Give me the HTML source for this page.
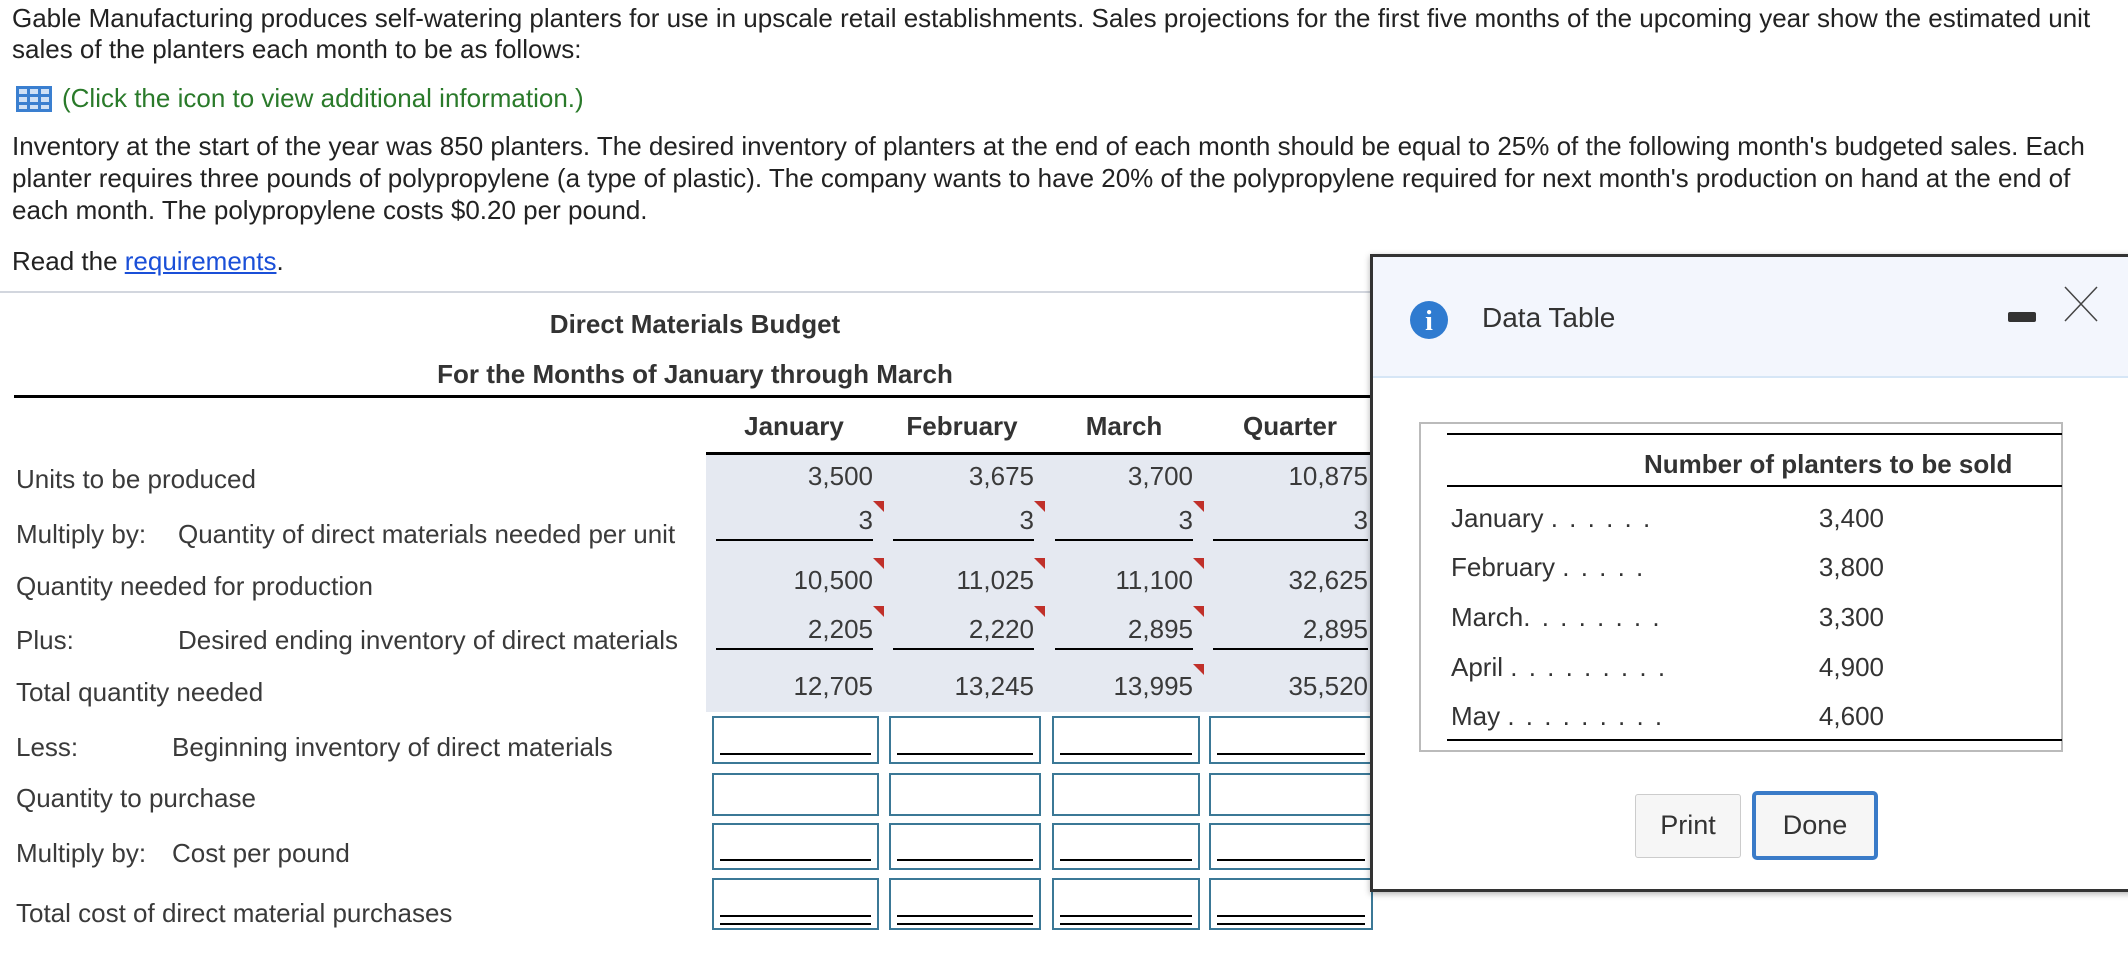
<!DOCTYPE html>
<html><head><meta charset="utf-8"><style>
body{margin:0;width:2128px;height:968px;position:relative;overflow:hidden;background:#fff;font-family:"Liberation Sans",Arial,sans-serif;color:#222;font-size:26px}
.a{position:absolute;white-space:nowrap;line-height:1}
.b{font-weight:bold;color:#333}
.g{color:#3a3a3a}
.r{text-align:right}
.c{text-align:center}
.hl{position:absolute;height:2px;background:#000}
.box{position:absolute;border:2px solid #3b7896;box-sizing:border-box}
.box i{position:absolute;left:6px;right:6px;bottom:7px;height:2px;background:#000}
.box u{position:absolute;left:6px;right:6px;bottom:3px;height:2px;background:#000}
.tri{position:absolute;width:0;height:0;border-left:11px solid transparent;border-top:11px solid #c0302a}
.d{letter-spacing:2px}
</style></head><body>
<div class="a" style="left:12px;top:5px">Gable Manufacturing produces self-watering planters for use in upscale retail establishments. Sales projections for the first five months of the upcoming year show the estimated unit</div>
<div class="a" style="left:12px;top:36px">sales of the planters each month to be as follows:</div>
<svg style="position:absolute;left:16px;top:86px" width="36" height="26" viewBox="0 0 36 26"><rect x="0" y="0" width="36" height="26" fill="#3a7fd0"/><g fill="#cfe0f5"><rect x="3" y="3" width="8" height="5"/><rect x="14" y="3" width="8" height="5"/><rect x="25" y="3" width="8" height="5"/><rect x="3" y="11" width="8" height="5"/><rect x="14" y="11" width="8" height="5"/><rect x="25" y="11" width="8" height="5"/><rect x="3" y="19" width="8" height="4"/><rect x="14" y="19" width="8" height="4"/><rect x="25" y="19" width="8" height="4"/></g></svg>
<div class="a" style="left:62px;top:85px;color:#2a7a2a">(Click the icon to view additional information.)</div>
<div class="a" style="left:12px;top:133px">Inventory at the start of the year was 850 planters. The desired inventory of planters at the end of each month should be equal to 25% of the following month's budgeted sales. Each</div>
<div class="a" style="left:12px;top:165px">planter requires three pounds of polypropylene (a type of plastic). The company wants to have 20% of the polypropylene required for next month's production on hand at the end of</div>
<div class="a" style="left:12px;top:197px">each month. The polypropylene costs $0.20 per pound.</div>
<div class="a" style="left:12px;top:248px">Read the <span style="color:#1a4fd8;text-decoration:underline">requirements</span>.</div>
<div style="position:absolute;left:0;top:291px;width:1371px;height:2px;background:#d2d6de"></div>
<div class="a b c" style="left:395px;width:600px;top:311px">Direct Materials Budget</div>
<div class="a b c" style="left:395px;width:600px;top:361px">For the Months of January through March</div>
<div class="hl" style="left:14px;top:395px;width:1357px;height:3px"></div>
<div class="a b c" style="left:724px;width:140px;top:413px">January</div>
<div class="a b c" style="left:892px;width:140px;top:413px">February</div>
<div class="a b c" style="left:1054px;width:140px;top:413px">March</div>
<div class="a b c" style="left:1220px;width:140px;top:413px">Quarter</div>
<div style="position:absolute;left:706px;top:452px;width:665px;height:257px;background:#e5e9f1;border-top:3px solid #000"></div>
<div class="a g" style="left:16px;top:466px">Units to be produced</div>
<div class="a g" style="left:16px;top:521px">Multiply by:</div><div class="a g" style="left:178px;top:521px">Quantity of direct materials needed per unit</div>
<div class="a g" style="left:16px;top:573px">Quantity needed for production</div>
<div class="a g" style="left:16px;top:627px">Plus:</div><div class="a g" style="left:178px;top:627px">Desired ending inventory of direct materials</div>
<div class="a g" style="left:16px;top:679px">Total quantity needed</div>
<div class="a g" style="left:16px;top:734px">Less:</div><div class="a g" style="left:172px;top:734px">Beginning inventory of direct materials</div>
<div class="a g" style="left:16px;top:785px">Quantity to purchase</div>
<div class="a g" style="left:16px;top:840px">Multiply by:</div><div class="a g" style="left:172px;top:840px">Cost per pound</div>
<div class="a g" style="left:16px;top:900px">Total cost of direct material purchases</div>

<div class="a g r" style="right:1255px;top:463px">3,500</div>
<div class="a g r" style="right:1094px;top:463px">3,675</div>
<div class="a g r" style="right:935px;top:463px">3,700</div>
<div class="a g r" style="right:760px;top:463px">10,875</div>
<div class="a g r" style="right:1255px;top:507px">3</div>
<div class="a g r" style="right:1094px;top:507px">3</div>
<div class="a g r" style="right:935px;top:507px">3</div>
<div class="a g r" style="right:760px;top:507px">3</div>
<div class="hl" style="left:716px;top:539px;width:157px"></div><div class="hl" style="left:893px;top:539px;width:141px"></div><div class="hl" style="left:1055px;top:539px;width:138px"></div><div class="hl" style="left:1213px;top:539px;width:155px"></div>
<div class="a g r" style="right:1255px;top:567px">10,500</div>
<div class="a g r" style="right:1094px;top:567px">11,025</div>
<div class="a g r" style="right:935px;top:567px">11,100</div>
<div class="a g r" style="right:760px;top:567px">32,625</div>
<div class="a g r" style="right:1255px;top:616px">2,205</div>
<div class="a g r" style="right:1094px;top:616px">2,220</div>
<div class="a g r" style="right:935px;top:616px">2,895</div>
<div class="a g r" style="right:760px;top:616px">2,895</div>
<div class="hl" style="left:716px;top:648px;width:157px"></div><div class="hl" style="left:893px;top:648px;width:141px"></div><div class="hl" style="left:1055px;top:648px;width:138px"></div><div class="hl" style="left:1213px;top:648px;width:155px"></div>
<div class="a g r" style="right:1255px;top:673px">12,705</div>
<div class="a g r" style="right:1094px;top:673px">13,245</div>
<div class="a g r" style="right:935px;top:673px">13,995</div>
<div class="a g r" style="right:760px;top:673px">35,520</div>
<div class="tri" style="left:873px;top:501px"></div><div class="tri" style="left:1034px;top:501px"></div><div class="tri" style="left:1193px;top:501px"></div>
<div class="tri" style="left:873px;top:558px"></div><div class="tri" style="left:1034px;top:558px"></div><div class="tri" style="left:1193px;top:558px"></div>
<div class="tri" style="left:873px;top:606px"></div><div class="tri" style="left:1034px;top:606px"></div><div class="tri" style="left:1193px;top:606px"></div>
<div class="tri" style="left:1193px;top:664px"></div>

<div class="box" style="left:712px;top:716px;width:167px;height:48px"><i></i></div>
<div class="box" style="left:889px;top:716px;width:152px;height:48px"><i></i></div>
<div class="box" style="left:1052px;top:716px;width:148px;height:48px"><i></i></div>
<div class="box" style="left:1209px;top:716px;width:164px;height:48px"><i></i></div>
<div class="box" style="left:712px;top:773px;width:167px;height:43px"></div>
<div class="box" style="left:889px;top:773px;width:152px;height:43px"></div>
<div class="box" style="left:1052px;top:773px;width:148px;height:43px"></div>
<div class="box" style="left:1209px;top:773px;width:164px;height:43px"></div>
<div class="box" style="left:712px;top:823px;width:167px;height:47px"><i></i></div>
<div class="box" style="left:889px;top:823px;width:152px;height:47px"><i></i></div>
<div class="box" style="left:1052px;top:823px;width:148px;height:47px"><i></i></div>
<div class="box" style="left:1209px;top:823px;width:164px;height:47px"><i></i></div>
<div class="box" style="left:712px;top:878px;width:167px;height:52px"><i style="bottom:11px"></i><u></u></div>
<div class="box" style="left:889px;top:878px;width:152px;height:52px"><i style="bottom:11px"></i><u></u></div>
<div class="box" style="left:1052px;top:878px;width:148px;height:52px"><i style="bottom:11px"></i><u></u></div>
<div class="box" style="left:1209px;top:878px;width:164px;height:52px"><i style="bottom:11px"></i><u></u></div>

<div style="position:absolute;left:1370px;top:254px;width:770px;height:632px;border:3px solid #333;background:#fff;box-shadow:0 2px 6px rgba(0,0,0,.3)"></div>
<div style="position:absolute;left:1373px;top:257px;width:760px;height:119px;background:#f3f6fd;border-bottom:2px solid #d6e6f6"></div>
<svg style="position:absolute;left:1410px;top:301px" width="38" height="38" viewBox="0 0 38 38"><circle cx="19" cy="19" r="19" fill="#2f7bd0"/><text x="19" y="29" text-anchor="middle" font-family="Liberation Serif,serif" font-weight="bold" font-size="28" fill="#fff">i</text></svg>
<div class="a" style="left:1482px;top:304px;font-size:28px;color:#333">Data Table</div>
<div style="position:absolute;left:2008px;top:312px;width:28px;height:10px;background:#333;border-radius:2px"></div>
<svg style="position:absolute;left:2064px;top:286px" width="34" height="36"><path d="M1 1L33 35M33 1L1 35" stroke="#444" stroke-width="1.5"/></svg>
<div style="position:absolute;left:1419px;top:422px;width:644px;height:330px;border:2px solid #bbb;box-sizing:border-box"></div>
<div class="hl" style="left:1447px;top:433px;width:615px"></div>
<div class="a b" style="left:1644px;top:451px">Number of planters to be sold</div>
<div class="hl" style="left:1447px;top:485px;width:615px"></div>
<div class="a" style="left:1451px;top:505px;color:#333">January <span class="d">. . . . . .</span></div>
<div class="a" style="left:1451px;top:554px;color:#333">February <span class="d">. . . . .</span></div>
<div class="a" style="left:1451px;top:604px;color:#333">March<span class="d">. . . . . . . .</span></div>
<div class="a" style="left:1451px;top:654px;color:#333">April <span class="d">. . . . . . . . .</span></div>
<div class="a" style="left:1451px;top:703px;color:#333">May <span class="d">. . . . . . . . .</span></div>
<div class="a r" style="right:244px;top:505px;color:#333">3,400</div>
<div class="a r" style="right:244px;top:554px;color:#333">3,800</div>
<div class="a r" style="right:244px;top:604px;color:#333">3,300</div>
<div class="a r" style="right:244px;top:654px;color:#333">4,900</div>
<div class="a r" style="right:244px;top:703px;color:#333">4,600</div>
<div class="hl" style="left:1447px;top:739px;width:615px"></div>
<div style="position:absolute;left:1635px;top:794px;width:106px;height:64px;border:1.5px solid #ccc;border-radius:3px;background:#f6f6f6;box-sizing:border-box;font-size:27px;color:#333;text-align:center;line-height:61px">Print</div>
<div style="position:absolute;left:1752px;top:791px;width:126px;height:69px;border:4px solid #3a7bc8;border-radius:5px;background:#f6f6f6;box-sizing:border-box;font-size:27px;color:#333;text-align:center;line-height:61px">Done</div>
</body></html>
